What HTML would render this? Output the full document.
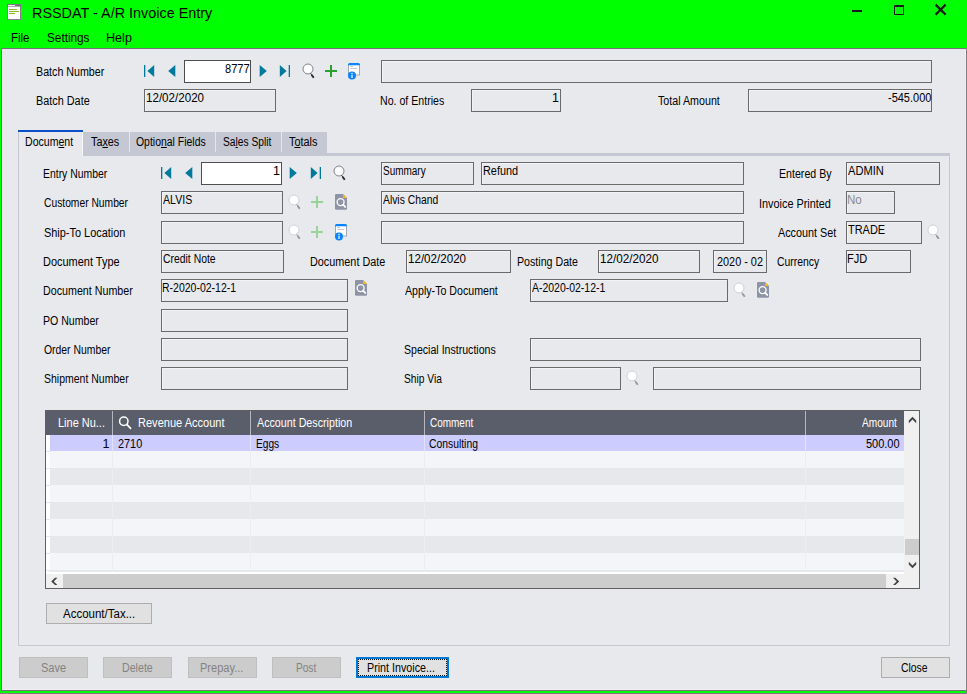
<!DOCTYPE html>
<html><head><meta charset="utf-8"><title>RSSDAT - A/R Invoice Entry</title>
<style>
html,body{margin:0;padding:0}
body{width:967px;height:694px;overflow:hidden;background:#00ff00;position:relative;font-family:"Liberation Sans", sans-serif;font-size:12.5px;color:#000}
.a{position:absolute}
.t{position:absolute;white-space:nowrap}
.f{position:absolute;box-sizing:border-box;border:1px solid #6a6a6a;background:#e8e9ed;box-shadow:inset 1px 1px 0 #f3f3f6}
.i{position:absolute;box-sizing:border-box;border:1px solid #4f4f4f;background:#fff}
.tab{position:absolute;top:132px;height:21px;background:#c5c7d2}
.btn{position:absolute;box-sizing:border-box;top:657px;height:21px;border:1px solid #adadad;background:#e1e1e1}
.btn.d{background:#cccccc;border-color:#bfbfbf}
.row{position:absolute;left:50px;width:854px;height:17px}
.vl{position:absolute;width:1px}
</style></head><body>
<div class="a" style="left:1px;top:48px;width:966px;height:643px;background:#77707a"></div>
<div class="a" style="left:2px;top:49px;width:964px;height:641px;background:#efeff3"></div>
<div class="a" style="left:3px;top:49px;width:962px;height:640px;background:#e8e9ed"></div>
<div class="a" style="left:966px;top:48px;width:1px;height:646px;background:#7f7f7f"></div>
<div class="a" style="left:0;top:693px;width:967px;height:1px;background:#8b738b"></div>
<svg class="a" style="left:7px;top:4px" width="14" height="16" viewBox="0 0 14 16"><rect x="0.5" y="0.5" width="13" height="15" fill="#fff" stroke="#8a7a8a"/><rect x="0" y="0" width="14" height="2.6" fill="#767676"/><rect x="1" y="1" width="7" height="1" fill="#fff"/><rect x="2" y="5" width="8" height="1" fill="#86b82c"/><rect x="2" y="7" width="10" height="1" fill="#86b82c"/><rect x="2" y="9" width="6" height="1" fill="#86b82c"/></svg>
<svg class="a" style="left:850px;top:0px" width="100" height="20" viewBox="0 0 100 20"><rect x="2" y="10" width="10" height="2" fill="#1a1a1a"/><path d="M44 5 H54 V15 H44 Z M45 7 V14 H53 V7 Z" fill="#1a1a1a" fill-rule="evenodd"/><path d="M85.6 4.6 L95.6 14.6 M95.6 4.6 L85.6 14.6" stroke="#1a1a1a" stroke-width="2.2" fill="none"/></svg>
<div class="a" style="left:18px;top:153px;width:932px;height:493px;box-sizing:border-box;border:1px solid #c5c7d2;border-top:3px solid #c5c7d2"></div>
<div class="tab" style="left:83px;width:244px"></div>
<div class="vl" style="left:129px;top:132px;height:20px;background:#e6e7ec"></div>
<div class="vl" style="left:215px;top:132px;height:20px;background:#e6e7ec"></div>
<div class="vl" style="left:281px;top:132px;height:20px;background:#e6e7ec"></div>
<div class="a" style="left:18px;top:130px;width:65px;height:26px;box-sizing:border-box;background:#e8e9ed;border-left:1px solid #c5c7d2;border-right:1px solid #f6f6f8"></div>
<div class="a" style="left:18px;top:130px;width:65px;height:2px;background:#0b50c8"></div>
<div class="i" style="left:184px;top:60px;width:67px;height:23px"></div>
<div class="f" style="left:381px;top:60px;width:551px;height:23px"></div>
<div class="f" style="left:144px;top:89px;width:132px;height:23px"></div>
<div class="f" style="left:471px;top:89px;width:90px;height:23px"></div>
<div class="f" style="left:748px;top:89px;width:184px;height:23px"></div>
<div class="i" style="left:201px;top:162px;width:81px;height:23px"></div>
<div class="f" style="left:381px;top:162px;width:93px;height:23px"></div>
<div class="f" style="left:481px;top:162px;width:263px;height:23px"></div>
<div class="f" style="left:846px;top:162px;width:94px;height:23px"></div>
<div class="f" style="left:161px;top:191px;width:122px;height:23px"></div>
<div class="f" style="left:381px;top:191px;width:363px;height:23px"></div>
<div class="f" style="left:846px;top:191px;width:49px;height:23px"></div>
<div class="f" style="left:161px;top:221px;width:122px;height:23px"></div>
<div class="f" style="left:381px;top:221px;width:363px;height:23px"></div>
<div class="f" style="left:846px;top:221px;width:76px;height:23px"></div>
<div class="f" style="left:161px;top:250px;width:123px;height:23px"></div>
<div class="f" style="left:406px;top:250px;width:105px;height:23px"></div>
<div class="f" style="left:598px;top:250px;width:102px;height:23px"></div>
<div class="f" style="left:713px;top:250px;width:54px;height:23px"></div>
<div class="f" style="left:846px;top:250px;width:65px;height:23px"></div>
<div class="f" style="left:161px;top:279px;width:187px;height:23px"></div>
<div class="f" style="left:530px;top:279px;width:198px;height:23px"></div>
<div class="f" style="left:161px;top:309px;width:187px;height:23px"></div>
<div class="f" style="left:161px;top:338px;width:187px;height:23px"></div>
<div class="f" style="left:530px;top:338px;width:391px;height:23px"></div>
<div class="f" style="left:161px;top:367px;width:187px;height:23px"></div>
<div class="f" style="left:530px;top:367px;width:91px;height:23px"></div>
<div class="f" style="left:653px;top:367px;width:268px;height:23px"></div>
<svg class="a" style="left:144px;top:65px" width="11" height="12" viewBox="0 0 11 12"><rect x="0" y="0" width="1.3" height="12" fill="#007a9c"/><path d="M10.2 0 L10.2 12 L3.4 6 Z" fill="#007a9c"/></svg>
<svg class="a" style="left:167.7px;top:65px" width="8" height="12" viewBox="0 0 8 12"><path d="M7.3 0 L7.3 12 L0.2 6 Z" fill="#007a9c"/></svg>
<svg class="a" style="left:258.5px;top:65px" width="8" height="12" viewBox="0 0 8 12"><path d="M0.7 0 L0.7 12 L7.8 6 Z" fill="#007a9c"/></svg>
<svg class="a" style="left:279px;top:65px" width="11" height="12" viewBox="0 0 11 12"><path d="M0.8 0 L0.8 12 L7.6 6 Z" fill="#007a9c"/><rect x="9.7" y="0" width="1.3" height="12" fill="#007a9c"/></svg>
<svg class="a" style="left:300.7px;top:61.7px" width="16" height="18" viewBox="0 0 16 18"><circle cx="7" cy="7" r="5" fill="#fff" stroke="#7f8490" stroke-width="1"/><path d="M9.6 11.3 L12.6 15.6" stroke="#2e2e2e" stroke-width="1" /><path d="M10.6 12.7 L12.7 15.7" stroke="#2e2e2e" stroke-width="1.9"/></svg>
<svg class="a" style="left:325px;top:65px" width="12" height="12" viewBox="0 0 12 12"><rect x="0" y="5" width="12" height="2" fill="#2ca02c"/><rect x="5" y="0" width="2" height="12" fill="#2ca02c"/></svg>
<svg class="a" style="left:348px;top:63px" width="13" height="17" viewBox="0 0 13 17"><rect x="0.5" y="1.5" width="11" height="10.5" fill="#fff" stroke="#a3a8b8" stroke-width="1"/><path d="M0 2.2 V1.5 Q0 0 1.5 0 H10.5 Q12 0 12 1.5 V2.2 Z" fill="#0a84ff"/><rect x="2.2" y="3" width="2.8" height="1" fill="#c4c7d0"/><rect x="2.2" y="5" width="6.8" height="1" fill="#c4c7d0"/><circle cx="4" cy="12.4" r="4" fill="#0a84ff"/><rect x="3.4" y="9.8" width="1.2" height="1.2" fill="#fff"/><rect x="3.4" y="11.6" width="1.2" height="3.4" fill="#fff"/></svg>
<svg class="a" style="left:160.5px;top:167px" width="11" height="12" viewBox="0 0 11 12"><rect x="0" y="0" width="1.3" height="12" fill="#007a9c"/><path d="M10.2 0 L10.2 12 L3.4 6 Z" fill="#007a9c"/></svg>
<svg class="a" style="left:185px;top:167px" width="8" height="12" viewBox="0 0 8 12"><path d="M7.3 0 L7.3 12 L0.2 6 Z" fill="#007a9c"/></svg>
<svg class="a" style="left:289.1px;top:167px" width="8" height="12" viewBox="0 0 8 12"><path d="M0.7 0 L0.7 12 L7.8 6 Z" fill="#007a9c"/></svg>
<svg class="a" style="left:310.1px;top:167px" width="11" height="12" viewBox="0 0 11 12"><path d="M0.8 0 L0.8 12 L7.6 6 Z" fill="#007a9c"/><rect x="9.7" y="0" width="1.3" height="12" fill="#007a9c"/></svg>
<svg class="a" style="left:331.5px;top:163.5px" width="16" height="18" viewBox="0 0 16 18"><circle cx="7" cy="7" r="5" fill="#fff" stroke="#7f8490" stroke-width="1"/><path d="M9.6 11.3 L12.6 15.6" stroke="#2e2e2e" stroke-width="1" /><path d="M10.6 12.7 L12.7 15.7" stroke="#2e2e2e" stroke-width="1.9"/></svg>
<svg class="a" style="left:286.6px;top:192.8px" width="16" height="18" viewBox="0 0 16 18"><circle cx="7" cy="7" r="5" fill="#fff" stroke="#cfd2d8" stroke-width="1"/><path d="M9.6 11.3 L12.6 15.6" stroke="#9a9a9a" stroke-width="1" /><path d="M10.6 12.7 L12.7 15.7" stroke="#9a9a9a" stroke-width="1.9"/></svg>
<svg class="a" style="left:311px;top:196px" width="12" height="12" viewBox="0 0 12 12"><rect x="0" y="5" width="12" height="2" fill="#97d597"/><rect x="5" y="0" width="2" height="12" fill="#97d597"/></svg>
<svg class="a" style="left:335px;top:194px" width="13" height="17" viewBox="0 0 13 17"><path d="M1.2 0 H8 L12 4 V14.6 Q12 15.8 10.8 15.8 H1.2 Q0 15.8 0 14.6 V1.2 Q0 0 1.2 0 Z" fill="#8e93a6"/><path d="M8 0 L12 4 H8 Z" fill="#fdb515"/><circle cx="5.6" cy="8.1" r="3.5" fill="none" stroke="#fff" stroke-width="1.3"/><path d="M8.1 10.7 L10.2 12.9" stroke="#fff" stroke-width="1.9" stroke-linecap="round"/></svg>
<svg class="a" style="left:286.6px;top:222.5px" width="16" height="18" viewBox="0 0 16 18"><circle cx="7" cy="7" r="5" fill="#fff" stroke="#cfd2d8" stroke-width="1"/><path d="M9.6 11.3 L12.6 15.6" stroke="#9a9a9a" stroke-width="1" /><path d="M10.6 12.7 L12.7 15.7" stroke="#9a9a9a" stroke-width="1.9"/></svg>
<svg class="a" style="left:311px;top:225.5px" width="12" height="12" viewBox="0 0 12 12"><rect x="0" y="5" width="12" height="2" fill="#97d597"/><rect x="5" y="0" width="2" height="12" fill="#97d597"/></svg>
<svg class="a" style="left:335px;top:223.8px" width="13" height="17" viewBox="0 0 13 17"><rect x="0.5" y="1.5" width="11" height="10.5" fill="#fff" stroke="#a3a8b8" stroke-width="1"/><path d="M0 2.2 V1.5 Q0 0 1.5 0 H10.5 Q12 0 12 1.5 V2.2 Z" fill="#0a84ff"/><rect x="2.2" y="3" width="2.8" height="1" fill="#c4c7d0"/><rect x="2.2" y="5" width="6.8" height="1" fill="#c4c7d0"/><circle cx="4" cy="12.4" r="4" fill="#0a84ff"/><rect x="3.4" y="9.8" width="1.2" height="1.2" fill="#fff"/><rect x="3.4" y="11.6" width="1.2" height="3.4" fill="#fff"/></svg>
<svg class="a" style="left:925.5px;top:222.5px" width="16" height="18" viewBox="0 0 16 18"><circle cx="7" cy="7" r="5" fill="#fff" stroke="#cfd2d8" stroke-width="1"/><path d="M9.6 11.3 L12.6 15.6" stroke="#9a9a9a" stroke-width="1" /><path d="M10.6 12.7 L12.7 15.7" stroke="#9a9a9a" stroke-width="1.9"/></svg>
<svg class="a" style="left:355px;top:280px" width="13" height="17" viewBox="0 0 13 17"><path d="M1.2 0 H8 L12 4 V14.6 Q12 15.8 10.8 15.8 H1.2 Q0 15.8 0 14.6 V1.2 Q0 0 1.2 0 Z" fill="#8e93a6"/><path d="M8 0 L12 4 H8 Z" fill="#fdb515"/><circle cx="5.6" cy="8.1" r="3.5" fill="none" stroke="#fff" stroke-width="1.3"/><path d="M8.1 10.7 L10.2 12.9" stroke="#fff" stroke-width="1.9" stroke-linecap="round"/></svg>
<svg class="a" style="left:731.5px;top:280.5px" width="16" height="18" viewBox="0 0 16 18"><circle cx="7" cy="7" r="5" fill="#fff" stroke="#cfd2d8" stroke-width="1"/><path d="M9.6 11.3 L12.6 15.6" stroke="#9a9a9a" stroke-width="1" /><path d="M10.6 12.7 L12.7 15.7" stroke="#9a9a9a" stroke-width="1.9"/></svg>
<svg class="a" style="left:757px;top:282px" width="13" height="17" viewBox="0 0 13 17"><path d="M1.2 0 H8 L12 4 V14.6 Q12 15.8 10.8 15.8 H1.2 Q0 15.8 0 14.6 V1.2 Q0 0 1.2 0 Z" fill="#8e93a6"/><path d="M8 0 L12 4 H8 Z" fill="#fdb515"/><circle cx="5.6" cy="8.1" r="3.5" fill="none" stroke="#fff" stroke-width="1.3"/><path d="M8.1 10.7 L10.2 12.9" stroke="#fff" stroke-width="1.9" stroke-linecap="round"/></svg>
<svg class="a" style="left:625px;top:368.5px" width="16" height="18" viewBox="0 0 16 18"><circle cx="7" cy="7" r="5" fill="#fff" stroke="#cfd2d8" stroke-width="1"/><path d="M9.6 11.3 L12.6 15.6" stroke="#9a9a9a" stroke-width="1" /><path d="M10.6 12.7 L12.7 15.7" stroke="#9a9a9a" stroke-width="1.9"/></svg>
<div class="a" style="left:45px;top:410px;width:875px;height:179px;box-sizing:border-box;border:1px solid #5f5f5f;background:#fff"></div>
<div class="a" style="left:46px;top:411px;width:858px;height:24px;background:#5a5e6b"></div>
<div class="vl" style="left:112px;top:411px;height:24px;background:#b4b6c0"></div>
<div class="vl" style="left:250px;top:411px;height:24px;background:#b4b6c0"></div>
<div class="vl" style="left:424px;top:411px;height:24px;background:#b4b6c0"></div>
<div class="vl" style="left:805px;top:411px;height:24px;background:#b4b6c0"></div>
<div class="row" style="top:435px;height:16px;background:#ccccff"></div>
<div class="row" style="top:451px;height:17px;background:#f4f5f9"></div>
<div class="row" style="top:468px;height:17px;background:#e7e8eb"></div>
<div class="row" style="top:485px;height:17px;background:#f4f5f9"></div>
<div class="row" style="top:502px;height:17px;background:#e7e8eb"></div>
<div class="row" style="top:519px;height:17px;background:#f4f5f9"></div>
<div class="row" style="top:536px;height:17px;background:#e7e8eb"></div>
<div class="row" style="top:553px;height:17px;background:#f4f5f9"></div>
<div class="row" style="top:570px;height:2px;background:#e7e8eb"></div>
<div class="vl" style="left:112px;top:435px;height:16px;background:#e2e2fb"></div>
<div class="vl" style="left:112px;top:451px;height:121px;background:#eceded"></div>
<div class="vl" style="left:250px;top:435px;height:16px;background:#e2e2fb"></div>
<div class="vl" style="left:250px;top:451px;height:121px;background:#eceded"></div>
<div class="vl" style="left:424px;top:435px;height:16px;background:#e2e2fb"></div>
<div class="vl" style="left:424px;top:451px;height:121px;background:#eceded"></div>
<div class="vl" style="left:805px;top:435px;height:16px;background:#e2e2fb"></div>
<div class="vl" style="left:805px;top:451px;height:121px;background:#eceded"></div>
<div class="a" style="left:46px;top:451px;width:4px;height:1px;background:#e4e4e8"></div>
<div class="a" style="left:46px;top:468px;width:4px;height:1px;background:#e4e4e8"></div>
<div class="a" style="left:46px;top:485px;width:4px;height:1px;background:#e4e4e8"></div>
<div class="a" style="left:46px;top:502px;width:4px;height:1px;background:#e4e4e8"></div>
<div class="a" style="left:46px;top:519px;width:4px;height:1px;background:#e4e4e8"></div>
<div class="a" style="left:46px;top:536px;width:4px;height:1px;background:#e4e4e8"></div>
<div class="a" style="left:46px;top:553px;width:4px;height:1px;background:#e4e4e8"></div>
<div class="a" style="left:46px;top:570px;width:4px;height:1px;background:#e4e4e8"></div>
<svg class="a" style="left:117.6px;top:414.8px" width="14" height="16" viewBox="0 0 14 16"><circle cx="5.8" cy="6.3" r="4.2" fill="none" stroke="#fff" stroke-width="1.5"/><path d="M9 9.6 L12.6 13.4" stroke="#fff" stroke-width="1.7" stroke-linecap="round"/></svg>
<div class="a" style="left:904px;top:411px;width:15px;height:163px;background:#f0f0f0"></div>
<div class="a" style="left:905px;top:539px;width:14px;height:16px;background:#cdcdcd"></div>
<svg class="a" style="left:908px;top:416px" width="10" height="8" viewBox="0 0 10 8"><path d="M4.5 0.8 L8.2 4.6 V7.2 L4.5 3.6 L0.8 7.2 V4.6 Z" fill="#444444"/></svg>
<svg class="a" style="left:908px;top:561px" width="10" height="8" viewBox="0 0 10 8"><path d="M4.5 7.2 L8.2 3.4 V0.8 L4.5 4.4 L0.8 0.8 V3.4 Z" fill="#444444"/></svg>
<div class="a" style="left:46px;top:574px;width:858px;height:14px;background:#cdcdcd"></div>
<div class="a" style="left:46px;top:574px;width:17px;height:14px;background:#f0f0f0"></div>
<div class="a" style="left:886px;top:574px;width:33px;height:14px;background:#f0f0f0"></div>
<svg class="a" style="left:50px;top:577px" width="9" height="10" viewBox="0 0 9 10"><path d="M1.2 4.4 L5 0.7 H7.4 L3.8 4.4 L7.4 8.1 H5 Z" fill="#444444"/></svg>
<svg class="a" style="left:891px;top:577px" width="9" height="10" viewBox="0 0 9 10"><path d="M8.2 4.4 L4.4 0.7 H2 L5.6 4.4 L2 8.1 H4.4 Z" fill="#444444"/></svg>
<div class="btn" style="left:46px;top:603px;width:106px"></div>
<div class="btn d" style="left:19px;width:69px"></div>
<div class="btn d" style="left:103px;width:69px"></div>
<div class="btn d" style="left:188px;width:69px"></div>
<div class="btn d" style="left:272px;width:69px"></div>
<div class="btn" style="left:356px;width:93px;border:2px solid #0078d7"></div>
<div class="a" style="left:358px;top:659px;width:89px;height:17px;box-sizing:border-box;border:1px dotted #111"></div>
<div class="btn" style="left:881px;width:69px"></div>
<div class="t" style="left:31.74px;top:3px;font-size:15.5px;line-height:19px;transform:scaleX(0.9287);transform-origin:0 0;">RSSDAT - A/R Invoice Entry</div>
<div class="t" style="left:10.78px;top:31px;font-size:12.5px;line-height:15px;transform:scaleX(0.9181);transform-origin:0 0;">File</div>
<div class="t" style="left:46.51px;top:31px;font-size:12.5px;line-height:15px;transform:scaleX(0.9405);transform-origin:0 0;">Settings</div>
<div class="t" style="left:106.19px;top:31px;font-size:12.5px;line-height:15px;transform:scaleX(1.0073);transform-origin:0 0;">Help</div>
<div class="t" style="left:35.65px;top:65px;font-size:12.5px;line-height:15px;transform:scaleX(0.8547);transform-origin:0 0;">Batch Number</div>
<div class="t" style="left:35.63px;top:94px;font-size:12.5px;line-height:15px;transform:scaleX(0.8680);transform-origin:0 0;">Batch Date</div>
<div class="t" style="left:380.15px;top:94px;font-size:12.5px;line-height:15px;transform:scaleX(0.8485);transform-origin:0 0;">No. of Entries</div>
<div class="t" style="left:658.29px;top:94px;font-size:12.5px;line-height:15px;transform:scaleX(0.8557);transform-origin:0 0;">Total Amount</div>
<div class="t" style="left:43.27px;top:167px;font-size:12.5px;line-height:15px;transform:scaleX(0.8329);transform-origin:0 0;">Entry Number</div>
<div class="t" style="left:43.59px;top:196px;font-size:12.5px;line-height:15px;transform:scaleX(0.8227);transform-origin:0 0;">Customer Number</div>
<div class="t" style="left:43.55px;top:226px;font-size:12.5px;line-height:15px;transform:scaleX(0.8742);transform-origin:0 0;">Ship-To Location</div>
<div class="t" style="left:43.22px;top:255px;font-size:12.5px;line-height:15px;transform:scaleX(0.8770);transform-origin:0 0;">Document Type</div>
<div class="t" style="left:43.24px;top:284px;font-size:12.5px;line-height:15px;transform:scaleX(0.8559);transform-origin:0 0;">Document Number</div>
<div class="t" style="left:43.25px;top:314px;font-size:12.5px;line-height:15px;transform:scaleX(0.8463);transform-origin:0 0;">PO Number</div>
<div class="t" style="left:43.58px;top:343px;font-size:12.5px;line-height:15px;transform:scaleX(0.8316);transform-origin:0 0;">Order Number</div>
<div class="t" style="left:43.57px;top:372px;font-size:12.5px;line-height:15px;transform:scaleX(0.8401);transform-origin:0 0;">Shipment Number</div>
<div class="t" style="left:310.43px;top:255px;font-size:12.5px;line-height:15px;transform:scaleX(0.8669);transform-origin:0 0;">Document Date</div>
<div class="t" style="left:516.75px;top:255px;font-size:12.5px;line-height:15px;transform:scaleX(0.8514);transform-origin:0 0;">Posting Date</div>
<div class="t" style="left:779.25px;top:167px;font-size:12.5px;line-height:15px;transform:scaleX(0.8494);transform-origin:0 0;">Entered By</div>
<div class="t" style="left:759.22px;top:197px;font-size:12.5px;line-height:15px;transform:scaleX(0.8693);transform-origin:0 0;">Invoice Printed</div>
<div class="t" style="left:778.00px;top:226px;font-size:12.5px;line-height:15px;transform:scaleX(0.8653);transform-origin:0 0;">Account Set</div>
<div class="t" style="left:776.88px;top:255px;font-size:12.5px;line-height:15px;transform:scaleX(0.8320);transform-origin:0 0;">Currency</div>
<div class="t" style="left:404.50px;top:284px;font-size:12.5px;line-height:15px;transform:scaleX(0.8505);transform-origin:0 0;">Apply-To Document</div>
<div class="t" style="left:403.97px;top:343px;font-size:12.5px;line-height:15px;transform:scaleX(0.8466);transform-origin:0 0;">Special Instructions</div>
<div class="t" style="left:403.99px;top:372px;font-size:12.5px;line-height:15px;transform:scaleX(0.8197);transform-origin:0 0;">Ship Via</div>
<div class="t" style="left:224.56px;top:62px;font-size:12.5px;line-height:15px;transform:scaleX(0.8864);transform-origin:0 0;">8777</div>
<div class="t" style="left:145.97px;top:91px;font-size:12.5px;line-height:15px;transform:scaleX(0.9279);transform-origin:0 0;">12/02/2020</div>
<div class="t" style="left:551.92px;top:91px;font-size:12.5px;line-height:15px;transform:scaleX(1.0000);transform-origin:0 0;">1</div>
<div class="t" style="left:887.56px;top:91px;font-size:12.5px;line-height:15px;transform:scaleX(0.8786);transform-origin:0 0;">-545.000</div>
<div class="t" style="left:273.02px;top:164px;font-size:12.5px;line-height:15px;transform:scaleX(1.0000);transform-origin:0 0;">1</div>
<div class="t" style="left:382.80px;top:164px;font-size:12.5px;line-height:15px;transform:scaleX(0.7981);transform-origin:0 0;">Summary</div>
<div class="t" style="left:482.73px;top:164px;font-size:12.5px;line-height:15px;transform:scaleX(0.8701);transform-origin:0 0;">Refund</div>
<div class="t" style="left:847.90px;top:164px;font-size:12.5px;line-height:15px;transform:scaleX(0.8892);transform-origin:0 0;">ADMIN</div>
<div class="t" style="left:163.20px;top:193px;font-size:12.5px;line-height:15px;transform:scaleX(0.8471);transform-origin:0 0;">ALVIS</div>
<div class="t" style="left:383.30px;top:193px;font-size:12.5px;line-height:15px;transform:scaleX(0.8273);transform-origin:0 0;">Alvis Chand</div>
<div class="t" style="left:846.98px;top:193px;font-size:12.5px;line-height:15px;transform:scaleX(0.9241);transform-origin:0 0;color:#8a8a8a;">No</div>
<div class="t" style="left:848.28px;top:223px;font-size:12.5px;line-height:15px;transform:scaleX(0.8769);transform-origin:0 0;">TRADE</div>
<div class="t" style="left:162.68px;top:252px;font-size:12.5px;line-height:15px;transform:scaleX(0.8323);transform-origin:0 0;">Credit Note</div>
<div class="t" style="left:407.87px;top:252px;font-size:12.5px;line-height:15px;transform:scaleX(0.9279);transform-origin:0 0;">12/02/2020</div>
<div class="t" style="left:599.87px;top:252px;font-size:12.5px;line-height:15px;transform:scaleX(0.9344);transform-origin:0 0;">12/02/2020</div>
<div class="t" style="left:716.96px;top:255px;font-size:12.5px;line-height:15px;transform:scaleX(0.8697);transform-origin:0 0;">2020 - 02</div>
<div class="t" style="left:847.02px;top:252px;font-size:12.5px;line-height:15px;transform:scaleX(0.8847);transform-origin:0 0;">FJD</div>
<div class="t" style="left:162.36px;top:281px;font-size:12.5px;line-height:15px;transform:scaleX(0.8392);transform-origin:0 0;">R-2020-02-12-1</div>
<div class="t" style="left:531.80px;top:281px;font-size:12.5px;line-height:15px;transform:scaleX(0.8368);transform-origin:0 0;">A-2020-02-12-1</div>
<div class="t" style="left:24.56px;top:135px;font-size:12.5px;line-height:15px;transform:scaleX(0.8447);transform-origin:0 0;">Docum<u>e</u>nt</div>
<div class="t" style="left:91.28px;top:135px;font-size:12.5px;line-height:15px;transform:scaleX(0.8656);transform-origin:0 0;">Ta<u>x</u>es</div>
<div class="t" style="left:136.08px;top:135px;font-size:12.5px;line-height:15px;transform:scaleX(0.8353);transform-origin:0 0;">Optio<u>n</u>al Fields</div>
<div class="t" style="left:222.59px;top:135px;font-size:12.5px;line-height:15px;transform:scaleX(0.8188);transform-origin:0 0;">Sa<u>l</u>es Split</div>
<div class="t" style="left:289.28px;top:135px;font-size:12.5px;line-height:15px;transform:scaleX(0.8688);transform-origin:0 0;">T<u>o</u>tals</div>
<div class="t" style="left:58.42px;top:416px;font-size:12.5px;line-height:15px;transform:scaleX(0.8779);transform-origin:0 0;color:#fff;">Line Nu...</div>
<div class="t" style="left:137.52px;top:416px;font-size:12.5px;line-height:15px;transform:scaleX(0.8836);transform-origin:0 0;color:#fff;">Revenue Account</div>
<div class="t" style="left:257.00px;top:416px;font-size:12.5px;line-height:15px;transform:scaleX(0.8562);transform-origin:0 0;color:#fff;">Account Description</div>
<div class="t" style="left:429.80px;top:416px;font-size:12.5px;line-height:15px;transform:scaleX(0.7981);transform-origin:0 0;color:#fff;">Comment</div>
<div class="t" style="left:862.20px;top:416px;font-size:12.5px;line-height:15px;transform:scaleX(0.8093);transform-origin:0 0;color:#fff;">Amount</div>
<div class="t" style="left:102.53px;top:437px;font-size:12.5px;line-height:15px;transform:scaleX(1.0000);transform-origin:0 0;">1</div>
<div class="t" style="left:117.86px;top:437px;font-size:12.5px;line-height:15px;transform:scaleX(0.8714);transform-origin:0 0;">2710</div>
<div class="t" style="left:256.19px;top:437px;font-size:12.5px;line-height:15px;transform:scaleX(0.8148);transform-origin:0 0;">Eggs</div>
<div class="t" style="left:429.28px;top:437px;font-size:12.5px;line-height:15px;transform:scaleX(0.8278);transform-origin:0 0;">Consulting</div>
<div class="t" style="left:865.56px;top:437px;font-size:12.5px;line-height:15px;transform:scaleX(0.8779);transform-origin:0 0;">500.00</div>
<div class="t" style="left:63.00px;top:607px;font-size:12.5px;line-height:15px;transform:scaleX(0.9202);transform-origin:0 0;">Account/Tax...</div>
<div class="t" style="left:40.95px;top:661px;font-size:12.5px;line-height:15px;transform:scaleX(0.8807);transform-origin:0 0;color:#838383;">Save</div>
<div class="t" style="left:121.65px;top:661px;font-size:12.5px;line-height:15px;transform:scaleX(0.8520);transform-origin:0 0;color:#838383;">Delete</div>
<div class="t" style="left:200.12px;top:661px;font-size:12.5px;line-height:15px;transform:scaleX(0.8830);transform-origin:0 0;color:#838383;">Prepay...</div>
<div class="t" style="left:295.69px;top:661px;font-size:12.5px;line-height:15px;transform:scaleX(0.8084);transform-origin:0 0;color:#838383;">Post</div>
<div class="t" style="left:367.14px;top:661px;font-size:12.5px;line-height:15px;transform:scaleX(0.8571);transform-origin:0 0;">Print Invoice...</div>
<div class="t" style="left:901.28px;top:661px;font-size:12.5px;line-height:15px;transform:scaleX(0.8325);transform-origin:0 0;">Close</div>
</body></html>
